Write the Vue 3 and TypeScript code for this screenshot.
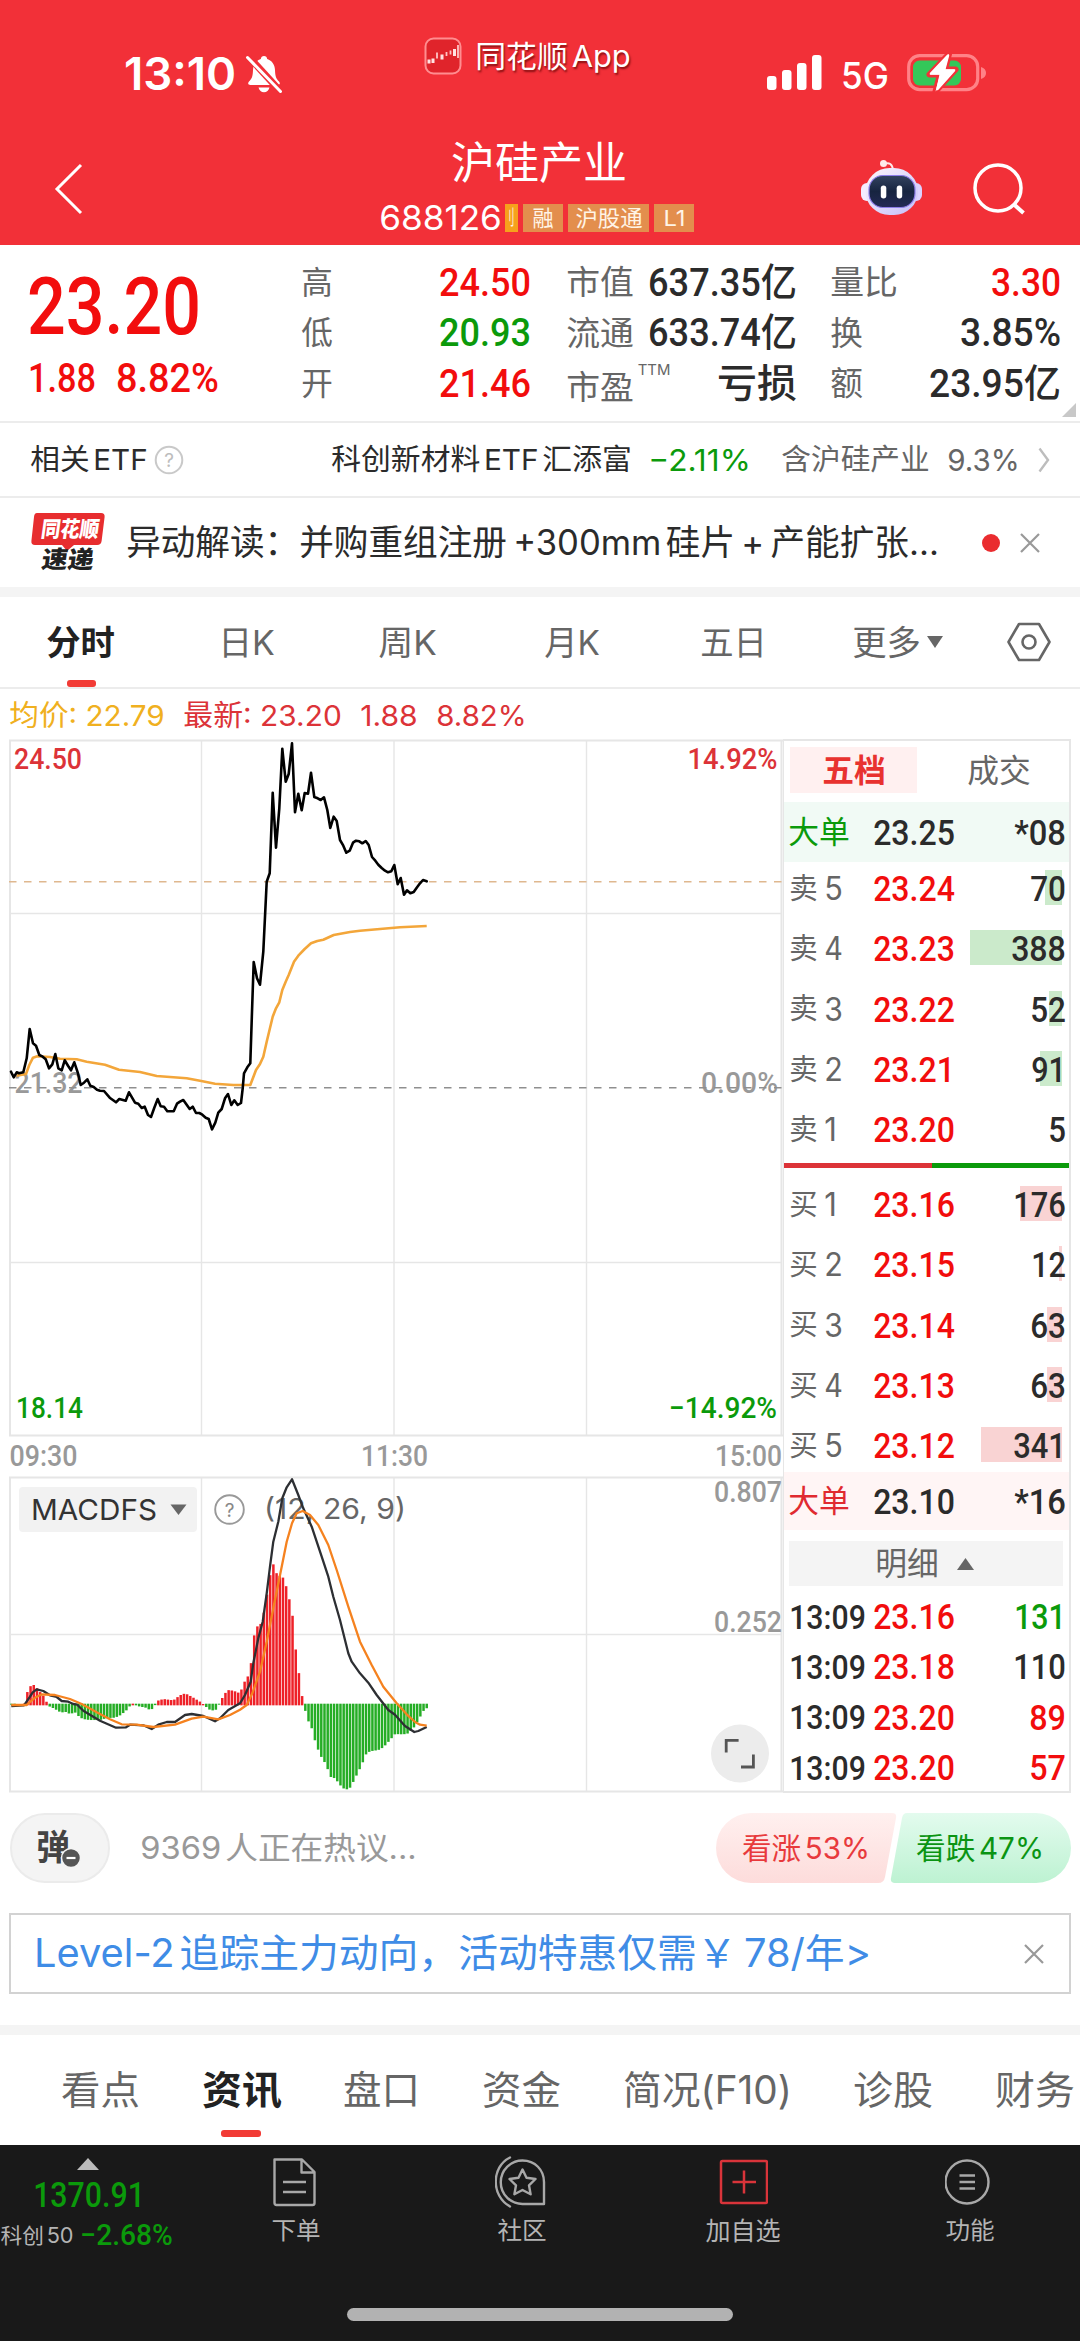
<script setup lang="ts">
import { h } from 'vue'

interface FitProps { t: string; w: number | string; s: number | string }

/* Single-line label whose glyph run is fitted to a given width. */
const Fit = (p: FitProps) => {
  const w = Number(p.w)
  const s = Number(p.s)
  return h('svg', { class: 'fit', width: w, height: s * 1.2, style: 'display:block;flex:none;overflow:visible' }, [
    h('text', { x: -0.025 * s, y: 0.96 * s, 'font-size': s, textLength: w + 0.05 * s, lengthAdjust: 'spacingAndGlyphs', fill: 'currentColor' }, p.t),
  ])
}
Fit.props = ['t', 'w', 's']

type Pt = [number, number]
const parse = (src: string): Pt[] => src.trim().split(/\s+/).map(p => p.split(',').map(Number) as Pt)
const line = (src: string, oy: number): string =>
  parse(src).map(([x, y]) => `${(x / 3).toFixed(1)},${(y / 3 + oy).toFixed(1)}`).join(' ')

const price = line(`33,1040 41,1057 50,1042 57,1045 70,1042 80,1000 89,912 99,955 108,962 118,990 128,995 137,1003 147,1030 157,1018
166,987 175,1030 185,1036 194,1006 204,1022 213,1036 223,1012 233,1042 242,1080 252,1073 262,1063 271,1082 281,1086 291,1094 300,1097
312,1098 329,1118 348,1132 358,1122 377,1127 387,1102 405,1133 415,1136 425,1149 434,1145 444,1170 453,1176 463,1148 473,1122 482,1144
492,1145 502,1159 521,1159 531,1136 540,1130 550,1125 569,1152 578,1145 588,1164 598,1164 607,1169 617,1178 626,1182 636,1213 646,1193
655,1163 665,1152 675,1120 684,1107 694,1140 703,1126 713,1140 723,1134 728,1090 732,1045 742,1027 751,1015 756,860 761,711 771,760
780,779 790,680 800,470 809,445 818,203 828,368 838,250 847,71 857,170 866,147 876,55 885,262 895,206 905,256 914,204 924,206 933,143
943,216 953,220 962,225 972,217 982,255 991,309 1001,275 1010,288 1020,345 1030,362 1039,383 1049,377 1059,353 1068,347 1078,349
1087,355 1097,348 1106,360 1116,396 1126,407 1135,419 1145,429 1155,437 1164,442 1174,439 1183,420 1193,478 1202,459 1212,509
1221,496 1231,505 1241,501 1250,488 1260,475 1269,465 1280,469`, 725)

const average = line(`50,1052 78,1047 88,1020 99,998 112,994 150,996 180,1001 230,1003 260,1010 315,1019 357,1034 420,1041 470,1053
560,1060 604,1068 645,1076 700,1080 751,1080 768,1035 780,1017 790,995 800,950 818,875 828,850 838,832 847,795 857,770 866,750
882,710 895,692 914,672 933,655 952,648 970,644 1001,630 1050,621 1080,617 1200,607 1280,603`, 725)

const dif = line(`34,978 72,976 90,950 98,937 110,928 130,933 150,946 170,951 185,963 205,965 220,972 232,974 250,992 300,1022 348,1043
378,1042 390,1034 430,1036 455,1047 475,1034 500,1026 525,1026 555,1005 575,1002 610,1008 645,1024 660,1015 685,990 720,970 735,945
752,905 760,850 775,775 788,725 800,640 810,560 820,485 835,425 847,355 860,322 876,298 895,345 910,385 935,440 965,530 985,590
1000,650 1020,720 1045,820 1055,845 1080,880 1105,908 1130,945 1165,990 1185,1004 1215,1038 1243,1056 1255,1053 1280,1041`, 1380)

const dea = line(`34,975 80,975 105,953 125,943 165,945 210,957 245,972 290,997 330,1018 365,1033 410,1034 460,1041 525,1034 575,1016
610,1010 655,1018 690,1005 720,989 740,975 757,940 780,875 800,785 820,685 845,560 860,485 876,430 890,400 908,393 930,405 955,435
985,495 1010,570 1045,680 1080,785 1115,855 1150,920 1190,970 1220,1003 1245,1026 1260,1034 1280,1037`, 1380)

const profile = parse(`34,974 72,972 85,925 95,915 105,915 115,932 125,940 135,955 145,978 155,982 170,990 183,998 195,995 210,1002
225,997 240,1013 255,1018 270,1020 300,1020 320,1014 345,1013 360,1006 375,995 385,985 395,969 405,975 420,980 435,982 450,990
462,984 470,963 490,957 520,961 530,953 548,941 562,943 580,953 605,968 615,978 630,990 645,992 655,980 660,965 672,945 682,930
700,932 720,940 730,912 740,893 750,882 759,780 769,740 780,737 790,705 805,620 817,543 827,577 837,587 847,590 855,603 865,650
875,677 884,787 894,857 903,933 913,980 922,1020 932,1032 941,1070 951,1100 960,1125 970,1140 980,1158 990,1190 1005,1195
1020,1215 1030,1225 1040,1228 1050,1223 1060,1205 1070,1185 1085,1155 1100,1118 1115,1113 1135,1110 1150,1102 1170,1080
1185,1062 1210,1063 1225,1060 1240,1045 1255,1020 1270,993 1282,983`)

const sample = (x: number): number => {
  const i = profile.findIndex(p => p[0] >= x)
  if (i <= 0) return profile[i === 0 ? 0 : profile.length - 1][1]
  const [a, b] = [profile[i - 1], profile[i]]
  return a[1] + ((b[1] - a[1]) * (x - a[0])) / (b[0] - a[0])
}
const bars = Array.from({ length: 131 }, (_, i) => {
  const x = 34 + i * 9.585
  const y = sample(x)
  const up = y < 973
  return { x: x / 3 - 1.2, y: up ? 1380 + y / 3 : 1703.7, h: up ? (976 - y) / 3 : (y - 971) / 3, up }
})

interface Level { side: string; n: string; nw: number; price: string; vol: string; w: number; bar: number }
const asks: Level[] = [
  { side: '卖', n: '5', nw: 17, price: '23.24', vol: '70', w: 34, bar: 17 },
  { side: '卖', n: '4', nw: 17, price: '23.23', vol: '388', w: 53, bar: 92 },
  { side: '卖', n: '3', nw: 17, price: '23.22', vol: '52', w: 34, bar: 13 },
  { side: '卖', n: '2', nw: 17, price: '23.21', vol: '91', w: 33, bar: 22 },
  { side: '卖', n: '1', nw: 11, price: '23.20', vol: '5', w: 16, bar: 0 },
]
const bids: Level[] = [
  { side: '买', n: '1', nw: 11, price: '23.16', vol: '176', w: 51, bar: 42 },
  { side: '买', n: '2', nw: 17, price: '23.15', vol: '12', w: 33, bar: 3 },
  { side: '买', n: '3', nw: 17, price: '23.14', vol: '63', w: 34, bar: 15 },
  { side: '买', n: '4', nw: 17, price: '23.13', vol: '63', w: 34, bar: 15 },
  { side: '买', n: '5', nw: 17, price: '23.12', vol: '341', w: 51, bar: 81 },
]
const ticks = [
  { price: '23.16', vol: '131', w: 50, c: 'green' },
  { price: '23.18', vol: '110', w: 51, c: 'dark' },
  { price: '23.20', vol: '89', w: 35, c: 'red' },
  { price: '23.20', vol: '57', w: 35, c: 'red' },
]
</script>

<template>
  <div class="app">
    <header class="head">
      <div class="status">
        <Fit class="clock" t="13:10" w="110" s="45" />
        <svg class="bell" width="38" height="40" viewBox="0 0 38 40">
          <path d="M19 2c1.8 0 3 1.200 3.200 3 5 1.700 7.600 5.800 7.800 11 .2 6 1 8.500 4 11.500 1.500 1.600 1 3.500-1.500 3.500H5.500C3 31 2.500 29 4 27.500c3-3 3.800-5.500 4-11.500.2-5.200 2.800-9.300 7.800-11C16 3.200 17.200 2 19 2zM13.500 33.500h11c-.8 3.200-2.800 4.800-5.500 4.800s-4.700-1.600-5.500-4.800z" fill="#fff" />
          <path d="M4 3 36 38" stroke="#f23038" stroke-width="7" />
          <path d="M2.500 3.500 35.500 37.500" stroke="#fff" stroke-width="3" stroke-linecap="round" />
        </svg>
        <svg class="appicon" width="38" height="38" viewBox="0 0 38 38">
          <rect x="1.500" y="1.500" width="35" height="35" rx="8" fill="#e0242b" stroke="#ff8d90" stroke-width="2" />
          <path d="M5 22.500v4M9 21.500v4.500M18 17.500v5M30.500 12v7" stroke="#ffe3e3" stroke-width="3" />
          <path d="M13 15.500v6M22.500 15v4M26.500 13.500v4M34 8v13" stroke="#ffc4c4" stroke-width="1.800" />
        </svg>
        <Fit class="appname" t="同花顺App" w="154" s="30" />
        <svg class="signal" width="56" height="38" viewBox="0 0 56 38">
          <g fill="#fff"><rect x="0" y="22" width="9.500" height="14" rx="3" /><rect x="15" y="16" width="9.500" height="20" rx="3" /><rect x="30" y="9" width="9.500" height="27" rx="3" /><rect x="45" y="1" width="9.500" height="35" rx="3" /></g>
        </svg>
        <Fit class="net" t="5G" w="46" s="37" />
        <svg class="battery" width="80" height="42" viewBox="0 0 80 42">
          <rect x="1.700" y="3.700" width="69" height="34" rx="11" fill="none" stroke="#ff8287" stroke-width="3.200" />
          <path d="M74 15q5 1.500 5 6t-5 6z" fill="#ff8287" />
          <rect x="6" y="8.500" width="48" height="25" rx="6.500" fill="#34c759" />
          <path d="M42 2 22.500 22.500H33L28.500 39.500 48.500 17.500H38z" fill="#fff" stroke="#f23038" stroke-width="6" stroke-linejoin="round" paint-order="stroke" />
          <path d="M41 3.500 24 21.500H34L30.500 37 47 18.500H37z" fill="#fff" stroke="#fff" stroke-width="2.500" stroke-linejoin="round" />
        </svg>
      </div>
      <div class="titlebar">
        <svg class="back" width="30" height="52" viewBox="0 0 30 52"><path d="M27 2 3 26 27 50" fill="none" stroke="#fff" stroke-width="3" /></svg>
        <div class="names">
          <Fit class="title" t="沪硅产业" w="174" s="44" />
          <div class="codes">
            <Fit t="688126" w="121" s="34" />
            <span class="tag cut"><Fit t="刂" w="9" s="20" /></span>
            <span class="tag w40"><Fit t="融" w="20" s="22" /></span>
            <span class="tag w81"><Fit t="沪股通" w="66" s="22" /></span>
            <span class="tag w40"><Fit t="L1" w="21" s="22" /></span>
          </div>
        </div>
        <svg class="robot" width="64" height="60" viewBox="859 158 64 60">
          <defs>
            <linearGradient id="hd" x1="0" y1="0" x2="1" y2="1"><stop offset="0" stop-color="#fff6fa" /><stop offset=".55" stop-color="#ded8fb" /><stop offset="1" stop-color="#c4bdf8" /></linearGradient>
            <linearGradient id="fc" x1="0" y1="0" x2="0" y2="1"><stop offset="0" stop-color="#33435f" /><stop offset=".5" stop-color="#172440" /><stop offset="1" stop-color="#242a55" /></linearGradient>
          </defs>
          <path d="M884 164q8-3 9 6" fill="none" stroke="#ffe9e9" stroke-width="2" />
          <circle cx="883.500" cy="163.500" r="3.500" fill="#ffeaea" />
          <rect x="861" y="183" width="12" height="18" rx="6" fill="#f4ecff" />
          <rect x="910" y="183" width="12" height="18" rx="6" fill="#dcd2ff" />
          <rect x="865.500" y="168" width="52.500" height="47" rx="24" fill="url(#hd)" />
          <rect x="869" y="175.500" width="46" height="32" rx="14" fill="url(#fc)" stroke="#8d7de8" stroke-width="1.200" />
          <rect x="880.800" y="185.500" width="5.500" height="13" rx="2.700" fill="#fff" />
          <rect x="896.700" y="185.500" width="5.500" height="13" rx="2.700" fill="#fff" />
        </svg>
        <svg class="search" width="54" height="54" viewBox="0 0 54 54"><circle cx="25" cy="25" r="23" fill="none" stroke="#fff" stroke-width="3.500" /><path d="M41 41.500 50.500 50" stroke="#fff" stroke-width="4" /></svg>
      </div>
    </header>

    <section class="quote">
      <div class="last red">
        <Fit class="num" t="23.20" w="170" s="79" />
        <div class="chg"><Fit class="num" t="1.88" w="66" s="40" /><Fit class="num" t="8.82%" w="101" s="40" /></div>
      </div>
      <div class="stat c1">
        <div><Fit t="高" w="30" s="32" /><Fit class="num red" t="24.50" w="90" s="39" /></div>
        <div><Fit t="低" w="30" s="32" /><Fit class="num green" t="20.93" w="90" s="39" /></div>
        <div><Fit t="开" w="30" s="32" /><Fit class="num red" t="21.46" w="90" s="39" /></div>
      </div>
      <div class="stat c2">
        <div><Fit t="市值" w="66" s="33" /><Fit class="num dark tight" t="637.35亿" w="147" s="39" /></div>
        <div><Fit t="流通" w="66" s="33" /><Fit class="num dark tight" t="633.74亿" w="147" s="39" /></div>
        <div><span class="pe"><Fit t="市盈" w="66" s="33" /><Fit class="ttm" t="TTM" w="32" s="15" /></span><Fit class="num dark" t="亏损" w="78" s="39" /></div>
      </div>
      <div class="stat c3">
        <div><Fit t="量比" w="66" s="33" /><Fit class="num red" t="3.30" w="68" s="39" /></div>
        <div><Fit t="换" w="31" s="33" /><Fit class="num dark" t="3.85%" w="99" s="39" /></div>
        <div><Fit t="额" w="31" s="33" /><Fit class="num dark tight" t="23.95亿" w="130" s="39" /></div>
      </div>
      <svg class="corner" width="14" height="14" viewBox="0 0 14 14"><path d="M14 0v14H0z" fill="#c8c8c8" /></svg>
    </section>

    <section class="etf">
      <Fit class="dark" t="相关ETF" w="116" s="29" />
      <svg class="q" width="30" height="30" viewBox="0 0 30 30"><circle cx="15" cy="15" r="13.300" fill="none" stroke="#c9c9c9" stroke-width="2" /><text x="15" y="22" text-anchor="middle" font-size="19" fill="#bdbdbd">?</text></svg>
      <Fit class="dark e1" t="科创新材料ETF汇添富" w="299" s="29" />
      <Fit class="green e2" t="−2.11%" w="101" s="30" />
      <Fit class="gray e3" t="含沪硅产业" w="147" s="29" />
      <Fit class="gray e4" t="9.3%" w="71" s="30" />
      <svg class="e5" width="12" height="26" viewBox="0 0 12 26"><path d="M1.500 1.500 10 13 1.500 24.500" fill="none" stroke="#bdbdbd" stroke-width="2.400" /></svg>
    </section>

    <section class="news">
      <svg class="logo" width="76" height="64" viewBox="0 0 76 64">
        <path d="M7 3h64q4 0 3.600 4l-3 24q-.5 4-4.500 4H44l-7 6-5-6H5q-4 0-3.600-4L4 7q.3-4 3-4z" fill="#e72d2f" />
        <text x="10" y="27" font-size="22" font-weight="900" fill="#fff" textLength="58" lengthAdjust="spacingAndGlyphs" transform="translate(4 0) skewX(-8)">同花顺</text>
        <text x="13" y="58.500" font-size="24" font-weight="900" fill="#222" textLength="52" lengthAdjust="spacingAndGlyphs" transform="translate(6 0) skewX(-8)">速递</text>
      </svg>
      <Fit class="dark n1" t="异动解读：并购重组注册&#8201;+300mm硅片&#8201;+&#8201;产能扩张..." w="811" s="35" />
      <i class="dot"></i>
      <svg class="x" width="20" height="20" viewBox="0 0 20 20"><path d="M1 1 19 19M19 1 1 19" stroke="#999" stroke-width="2.200" /></svg>
    </section>
    <div class="band"></div>

    <nav class="tabs">
      <span class="on"><Fit t="分时" w="67" s="34" /></span>
      <Fit class="t2 tight" t="日K" w="55" s="34" />
      <Fit class="t3 tight" t="周K" w="57" s="34" />
      <Fit class="t4 tight" t="月K" w="54" s="34" />
      <Fit class="t5" t="五日" w="65" s="34" />
      <Fit class="t6" t="更多" w="67" s="34" />
      <svg class="t7" width="16" height="12" viewBox="0 0 16 12"><path d="M0 0h16L8 12z" fill="#666" /></svg>
      <svg class="t8" width="44" height="40" viewBox="0 0 44 40"><path d="M12 2h20L42.500 20 32 38H12L1.500 20z" fill="none" stroke="#666" stroke-width="2.600" stroke-linejoin="round" /><circle cx="22" cy="20" r="6.500" fill="none" stroke="#666" stroke-width="2.600" /></svg>
    </nav>

    <div class="legend">
      <Fit class="avg" t="均价: 22.79" w="154" s="29" />
      <Fit class="l2" t="最新: 23.20" w="157" s="29" />
      <Fit class="l3" t="1.88" w="56" s="29" />
      <Fit class="l4" t="8.82%" w="89" s="29" />
    </div>

    <main class="main">
      <svg class="chart" width="783" height="1055" viewBox="0 739 783 1055">
        <g fill="none" stroke="#e6e6e6" stroke-width="2">
          <path d="M9 740.500H783M9 1435.500H783M9 1477.500H783M9 1791.500H783" />
          <path d="M10 740V1436M10 1477V1792M781.500 740V1436M781.500 1477V1792" />
          <path d="M201.500 740V1436M394 740V1436M586.500 740V1436M201.500 1477V1792M394 1477V1792M586.500 1477V1792M10 913.500H782M10 1262.500H782M10 1634.500H782" stroke-width="1.400" />
        </g>
        <g class="num" font-size="29" fill="#999">
          <text x="14.500" y="1093" textLength="68" lengthAdjust="spacingAndGlyphs">21.32</text>
          <text x="701" y="1093" textLength="77" lengthAdjust="spacingAndGlyphs">0.00%</text>
          <text x="9.500" y="1465.500" textLength="68" lengthAdjust="spacingAndGlyphs">09:30</text>
          <text x="361" y="1465.500" textLength="67" lengthAdjust="spacingAndGlyphs">11:30</text>
          <text x="715" y="1465.500" textLength="67" lengthAdjust="spacingAndGlyphs">15:00</text>
          <text x="714" y="1502" textLength="68" lengthAdjust="spacingAndGlyphs">0.807</text>
          <text x="714" y="1632" textLength="68" lengthAdjust="spacingAndGlyphs">0.252</text>
        </g>
        <path d="M9 881.700H782" stroke="#dfb88f" stroke-width="1.600" stroke-dasharray="7.500 7.500" />
        <path d="M9 1087.700H782" stroke="#8f8f8f" stroke-width="1.600" stroke-dasharray="7.500 7.500" />
        <polyline :points="average" fill="none" stroke="#f3a63a" stroke-width="2.600" stroke-linejoin="round" />
        <polyline :points="price" fill="none" stroke="#000" stroke-width="2.600" stroke-linejoin="round" stroke-linecap="round" />
        <g class="num" font-size="29">
          <text x="14" y="768.500" fill="#dc3338" textLength="68" lengthAdjust="spacingAndGlyphs">24.50</text>
          <text x="687.500" y="768.500" fill="#dc3338" textLength="90" lengthAdjust="spacingAndGlyphs">14.92%</text>
          <text x="16" y="1418" fill="#0b9a0b" textLength="67" lengthAdjust="spacingAndGlyphs">18.14</text>
          <text x="669" y="1418" fill="#0b9a0b" textLength="108" lengthAdjust="spacingAndGlyphs">−14.92%</text>
        </g>
        <rect x="19" y="1487" width="178" height="45" rx="4" fill="#f2f2f2" />
        <text x="31" y="1519.500" font-size="29" fill="#333" textLength="126" lengthAdjust="spacingAndGlyphs">MACDFS</text>
        <path d="M170.500 1504.500h16l-8 10.500z" fill="#666" />
        <circle cx="229.500" cy="1509.500" r="14.300" fill="none" stroke="#999" stroke-width="1.900" />
        <text x="229.500" y="1516.500" font-size="19" fill="#888" text-anchor="middle">?</text>
        <text x="264" y="1519" font-size="28" fill="#666" textLength="142" lengthAdjust="spacingAndGlyphs">(12, 26, 9)</text>
        <rect v-for="(b, i) in bars" :key="i" :x="b.x" :y="b.y" width="2.500" :height="b.h" :fill="b.up ? '#ee2128' : '#25ad25'" />
        <polyline :points="dif" fill="none" stroke="#2d2f33" stroke-width="2.300" stroke-linejoin="round" />
        <polyline :points="dea" fill="none" stroke="#f5821f" stroke-width="2.300" stroke-linejoin="round" />
        <circle cx="740" cy="1753.500" r="29" fill="#ececec" />
        <path d="M738.600 1740.300H726.200V1752.500M741 1767H753.400V1754.500" fill="none" stroke="#555" stroke-width="2.800" />
      </svg>

      <aside class="book">
        <div class="btabs"><span class="bt on"><Fit t="五档" w="62" s="32" /></span><span class="bt"><Fit t="成交" w="62" s="32" /></span></div>
        <div class="big sell"><Fit class="green" t="大单" w="60" s="31" /><Fit class="num p" t="23.25" w="80" s="35" /><Fit class="num v" t="*08" w="50" s="35" /></div>
        <div class="levels asks">
          <div v-for="l in asks" :key="l.n" class="lv">
            <Fit class="gray" :t="l.side" w="27" s="29" /><span class="n"><Fit class="gray" :t="l.n" :w="l.nw" s="32" /></span>
            <Fit class="num red p" :t="l.price" w="80" s="35" />
            <span class="vol"><i :style="{ width: l.bar + 'px' }"></i><Fit class="num" :t="l.vol" :w="l.w" s="35" /></span>
          </div>
        </div>
        <div class="split"><i></i><b></b></div>
        <div class="levels bids">
          <div v-for="l in bids" :key="l.n" class="lv">
            <Fit class="gray" :t="l.side" w="27" s="29" /><span class="n"><Fit class="gray" :t="l.n" :w="l.nw" s="32" /></span>
            <Fit class="num red p" :t="l.price" w="80" s="35" />
            <span class="vol"><i :style="{ width: l.bar + 'px' }"></i><Fit class="num" :t="l.vol" :w="l.w" s="35" /></span>
          </div>
        </div>
        <div class="big buy"><Fit class="crimson" t="大单" w="60" s="31" /><Fit class="num p" t="23.10" w="80" s="35" /><Fit class="num v" t="*16" w="50" s="35" /></div>
        <div class="detail"><Fit t="明细" w="62" s="32" /><svg width="17" height="12" viewBox="0 0 17 12"><path d="M0 12h17L8.500 0z" fill="#666" /></svg></div>
        <div v-for="(k, i) in ticks" :key="i" class="tick">
          <Fit class="num" t="13:09" w="75" s="34" /><Fit class="num red tp" :t="k.price" w="80" s="35" /><Fit class="num v" :class="k.c" :t="k.vol" :w="k.w" s="35" />
        </div>
      </aside>
    </main>

    <section class="talk">
      <span class="danmu">
        <Fit class="dan" t="弹" w="32" s="35" />
        <svg class="minus" width="22" height="22" viewBox="0 0 22 22"><circle cx="11" cy="11" r="9.500" fill="#555" stroke="#f4f4f4" stroke-width="1.500" /><path d="M6.500 11h9" stroke="#fff" stroke-width="2.200" /></svg>
      </span>
      <Fit class="hot" t="9369人正在热议..." w="275" s="31" />
      <div class="votes">
        <svg width="355" height="70" viewBox="0 0 355 70">
          <defs>
            <linearGradient id="up" x1="0" y1="0" x2="0" y2="1"><stop offset="0" stop-color="#fff0ef" /><stop offset="1" stop-color="#fddcdb" /></linearGradient>
            <linearGradient id="dn" x1="0" y1="0" x2="0" y2="1"><stop offset="0" stop-color="#e3fbee" /><stop offset="1" stop-color="#bdf2d2" /></linearGradient>
          </defs>
          <path d="M35 0H176Q181 0 180 5L169 64Q168 70 162 70H35A35 35 0 0 1 35 0z" fill="url(#up)" />
          <path d="M191 0H320A35 35 0 0 1 320 70H179Q174 70 175 65L186 5Q187 0 191 0z" fill="url(#dn)" />
          <text x="26" y="45.500" font-size="30" fill="#e83a3c" textLength="128" lengthAdjust="spacingAndGlyphs">看涨53%</text>
          <text x="200" y="45.500" font-size="30" fill="#0b9413" textLength="128" lengthAdjust="spacingAndGlyphs">看跌47%</text>
        </svg>
      </div>
    </section>

    <section class="ad">
      <Fit t="Level-2追踪主力动向，活动特惠仅需￥&#8201;78/年>" w="835" s="39" />
      <svg width="20" height="20" viewBox="0 0 20 20"><path d="M1 1 19 19M19 1 1 19" stroke="#999" stroke-width="2.200" /></svg>
    </section>
    <div class="band low"></div>

    <nav class="subtabs">
      <Fit t="看点" w="77" s="39" />
      <span class="on"><Fit t="资讯" w="78" s="39" /></span>
      <Fit t="盘口" w="75" s="39" />
      <Fit t="资金" w="77" s="39" />
      <Fit t="简况(F10)" w="167" s="39" />
      <Fit t="诊股" w="78" s="39" />
      <Fit t="财务" w="78" s="39" />
    </nav>

    <footer class="foot">
      <div class="bar">
        <div class="index">
          <svg class="caret" width="22" height="12" viewBox="0 0 22 12"><path d="M0 12h22L11 0z" fill="#bbb" /></svg>
          <Fit class="num i1" t="1370.91" w="110" s="35" />
          <div class="i2"><Fit class="lab" t="科创50" w="72" s="21" /><Fit class="num i3" t="−2.68%" w="91" s="29" /></div>
        </div>
        <div class="act a1">
          <svg width="48" height="52" viewBox="2 0 48 52" fill="none" stroke="#a8a8a8" stroke-width="2.400"><path d="M4.500 3.500H32L44.500 16V47Q44.500 49 42.500 49H6.500Q4.500 49 4.500 47zM31.500 4V16.500H44M13 26H36M13 36H36" stroke-linejoin="round" /></svg>
          <Fit t="下单" w="48" s="24" />
        </div>
        <div class="act a2">
          <svg width="54" height="52" viewBox="2 0 54 52" fill="none" stroke="#a8a8a8" stroke-width="2.400"><path d="M29.500 4.500C42 4.500 51 14 51 26V48H29.500A21.500 21.500 0 0 1 29.500 4.500z" stroke-linejoin="round" /><path d="M17 1.500C-2 11-2 40 17 50.500" stroke-linecap="round" /><path d="M29.500 13.500 33.500 21.800 42.500 23 36 29.300 37.600 38.300 29.500 34 21.400 38.300 23 29.300 16.500 23 25.500 21.800z" stroke-linejoin="round" /></svg>
          <Fit t="社区" w="48" s="24" />
        </div>
        <div class="act a3">
          <svg width="50" height="52" viewBox="-2 0 50 52" fill="none" stroke="#d9343a" stroke-width="2.500"><rect x="1" y="5" width="46" height="42" rx="1.500" /><path d="M12.500 26H36M24 14.500V37.500" /></svg>
          <Fit t="加自选" w="74" s="24.500" />
        </div>
        <div class="act a4">
          <svg width="50" height="52" viewBox="1 0 50 52" fill="none" stroke="#a8a8a8" stroke-width="2.400"><circle cx="23" cy="26" r="21.500" /><path d="M15.500 19.500H31M15.500 26H31M15.500 32.500H31" /></svg>
          <Fit t="功能" w="48" s="24" />
        </div>
      </div>
      <div class="home"></div>
    </footer>
  </div>
</template>

<style>
body { background: #fff; }
</style>
<style scoped>
.app { width: 1080px; height: 2341px; overflow: hidden; background: #fff; color: #666; font-family: Inter, "Noto Sans CJK SC", sans-serif; text-autospace: normal; box-sizing: border-box; }
.num { font-family: Roboto, "Noto Sans CJK SC", sans-serif; font-weight: 500; }
.tight { text-autospace: no-autospace; }
.red { color: #f20d0d; }
.green { color: #0b9a0b; }
.dark { color: #2b2b2b; }
.gray { color: #666; }
.crimson { color: #e02a30; }
i { display: block; }

.head { height: 245px; background: #f23038; color: #fff; }
.status { height: 140px; display: flex; align-items: flex-start; padding-left: 125px; box-sizing: border-box; }
.clock { margin-top: 47px; font-weight: 600; }
.bell { margin: 54px 0 0 10px; }
.appicon { margin: 37px 0 0 141px; }
.appname { margin: 38px 0 0 14px; text-shadow: 1px 2px 2px rgba(90, 0, 0, .7); }
.signal { margin: 54px 0 0 137px; }
.net { margin: 53px 0 0 19px; font-weight: 500; }
.battery { margin: 52px 0 0 19px; }
.titlebar { height: 105px; display: flex; align-items: flex-start; }
.back { margin: 23px 0 0 54px; }
.names { width: 330px; margin-left: 296px; }
.title { margin: -3px 0 0 72px; }
.codes { display: flex; align-items: center; gap: 5px; margin-top: 4px; height: 48px; }
.tag { height: 28px; background: #e38e4d; color: #fff4e6; display: flex; align-items: center; justify-content: center; }
.w40 { width: 40px; } .w81 { width: 81px; }
.cut { width: 13px; margin-left: -1px; background: #f6a11c; justify-content: flex-start; }
.robot { margin: 18px 0 0 149px; }
.search { margin: 23px 0 0 50px; }

.quote { height: 178px; display: flex; border-bottom: 2px solid #ececec; box-sizing: border-box; position: relative; }
.last { width: 190px; margin-left: 29px; padding-top: 13px; box-sizing: border-box; }
.chg { display: flex; gap: 22px; margin-top: 1px; }
.stat > div { display: flex; justify-content: space-between; align-items: center; height: 50.400px; }
.stat { padding-top: 12px; }
.c1 { width: 228px; margin-left: 83px; }
.c2 { width: 229px; margin-left: 37px; }
.c3 { width: 229px; margin-left: 35px; }
.pe { display: flex; align-items: flex-start; gap: 5px; padding-top: 8px; }
.ttm { margin-top: -6px; }
.corner { position: absolute; right: 4px; bottom: 4px; }

.etf { height: 75px; display: flex; align-items: center; padding-left: 31px; border-bottom: 2px solid #ececec; box-sizing: border-box; }
.q { margin-left: 7px; }
.e1 { margin-left: 148px; } .e2 { margin-left: 18px; } .e3 { margin-left: 32px; } .e4 { margin-left: 19px; } .e5 { margin-left: 19px; }

.news { height: 89px; display: flex; align-items: center; padding-left: 30px; }
.logo { margin-top: -2px; overflow: visible; }
.n1 { margin: -1px 0 0 21px; }
.dot { width: 18px; height: 18px; border-radius: 9px; background: #ea2c2f; margin-left: 44px; }
.x { margin-left: 20px; }
.band { height: 10px; background: #f4f4f4; }

.tabs { height: 92px; display: flex; align-items: center; padding-left: 47px; border-bottom: 2px solid #ececec; box-sizing: border-box; }
.on { position: relative; color: #222; font-weight: 600; }
.tabs .on::after { content: ""; position: absolute; left: 20px; top: 58px; width: 29px; height: 7px; border-radius: 3px; background: #f23b35; }
.t2 { margin-left: 105px; } .t3 { margin-left: 105px; } .t4 { margin-left: 109px; } .t5 { margin-left: 102px; }
.t6 { margin-left: 87px; } .t7 { margin-left: 7px; } .t8 { margin-left: 64px; }
.legend { height: 50px; display: flex; align-items: center; padding: 2px 0 0 10px; box-sizing: border-box; color: #dc3338; }
.avg { color: #f0b020; }
.l2 { margin-left: 20px; } .l3 { margin-left: 20px; } .l4 { margin-left: 20px; }

.main { height: 1055px; display: flex; }
.chart { display: block; flex: none; }
.book { width: 288px; height: 1054px; box-sizing: border-box; border: 2px solid #e6e6e6; border-left: 1px solid #e6e6e6; color: #2b2b2b; }
.btabs { height: 61px; display: flex; padding: 6px 0 0 6px; box-sizing: border-box; }
.bt { width: 142px; height: 46px; display: flex; align-items: center; justify-content: center; color: #666; }
.bt.on { width: 128px; background: #fff0f0; color: #e8322f; margin-right: 11px; }
.big { height: 60px; display: flex; align-items: center; padding: 0 4px 0 5px; }
.sell { background: #f1faf5; }
.big .p { margin-left: 25px; }
.v { margin-left: auto; }
.lv { height: 60.300px; display: flex; align-items: center; padding: 0 4px 0 6px; }
.lv .n { width: 17px; margin-left: 8px; }
.lv .p { margin-left: 32px; }
.asks { margin-top: -4px; height: 302px; }
.vol { margin-left: auto; position: relative; height: 42px; display: flex; align-items: center; }
.vol i { position: absolute; right: 3px; top: 3px; height: 35px; background: #cbeacb; }
.vol .fit { position: relative; }
.bids .vol i { background: #f9d3d3; }
.split { display: flex; height: 5px; margin-top: 3px; }
.split i { width: 148px; background: #dc3338; } .split b { flex: 1; background: #0b9a0b; }
.bids { margin-top: 6px; height: 298px; }
.buy { height: 58px; background: #fff5f5; }
.detail { margin: 11px 6px 0 5px; height: 45px; background: #f4f4f4; display: flex; align-items: center; justify-content: center; gap: 19px; padding-right: 16px; padding-left: 14px; box-sizing: border-box; color: #666; }
.tick { height: 50.300px; display: flex; align-items: center; padding: 0 4px 0 6px; }
.detail + .tick { margin-top: 5px; }
.tp { margin-left: 9px; }

.talk { height: 119px; display: flex; align-items: flex-start; padding: 19px 9px 0 10px; box-sizing: border-box; }
.danmu { width: 100px; height: 70px; border-radius: 35px; background: #f4f4f4; border: 2px solid #ebebeb; box-sizing: border-box; position: relative; }
.dan { margin: 11px 0 0 25px; color: #444; font-weight: 700; }
.minus { position: absolute; left: 48px; top: 32px; }
.hot { color: #999; margin: 16px 0 0 31px; }
.votes { margin-left: auto; }
.votes svg { display: block; }
.ad { margin: 0 9px; height: 81px; border: 2px solid #d2d2d2; box-sizing: border-box; display: flex; align-items: center; justify-content: space-between; padding: 0 25px 0 24px; color: #3f8ce6; }
.low { margin-top: 31px; }
.subtabs { height: 110px; display: flex; align-items: center; padding-left: 62px; gap: 63.700px; }
.subtabs .on::after { content: ""; position: absolute; left: 18px; top: 63px; width: 40px; height: 7px; border-radius: 3px; background: #f23b35; }

.foot { height: 196px; background: #191919; color: #b4b4b4; }
.bar { height: 163px; display: flex; }
.index { width: 176px; padding-top: 13px; box-sizing: border-box; color: #0b9a0b; }
.caret { display: block; margin-left: 77px; }
.i1 { margin: 3px 0 0 34px; }
.i2 { display: flex; align-items: center; margin-top: 2px; }
.lab { color: #b4b4b4; margin: 2px 0 0 1px; }
.i3 { margin-left: 8px; }
.act { width: 100px; flex: none; padding-top: 11px; box-sizing: border-box; display: flex; flex-direction: column; align-items: center; gap: 8px; }
.a1 { margin-left: 70px; }
.a2 { margin-left: 126px; }
.a3 { margin-left: 121px; }
.a4 { margin-left: 127px; }
.home { width: 386px; height: 13px; border-radius: 7px; background: #b2b2b2; margin: 0 auto; }
</style>
